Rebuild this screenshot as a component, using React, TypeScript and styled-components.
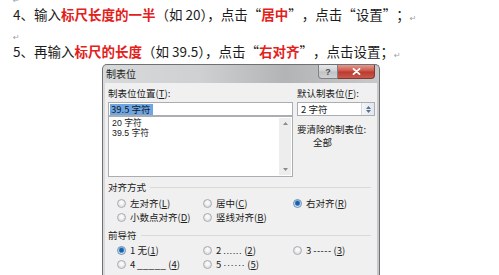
import styled, { createGlobalStyle } from 'styled-components';

const GlobalStyle = createGlobalStyle`
  html, body {
    margin: 0;
    padding: 0;
    background: #fff;
  }
  body {
    font-family: "Noto Sans CJK SC", "Liberation Sans", sans-serif;
  }
`;

const Page = styled.div`
  width: 499px;
  height: 275px;
  overflow: hidden;
`;

const Doc = styled.div`
  margin-top: -13.5px;
  padding-left: 13px;
  font-size: 13.5px;
  line-height: 18.5px;
  color: #1c1c1c;
`;

const Para = styled.div`
  height: 18.5px;
  white-space: nowrap;
`;

const Em = styled.b`
  color: #e3211b;
  font-weight: 700;
`;

// full-width curly quotes, as a Chinese Word document sets them
const Q = styled.span<{ $open?: boolean }>`
  display: inline-block;
  width: 1em;
  text-align: ${(p) => (p.$open ? 'right' : 'left')};
`;

const Mark = styled.span`
  font-family: "DejaVu Sans", sans-serif;
  font-size: 8px;
  color: #a0a0a0;
  vertical-align: -1px;
`;

const Dialog = styled.div`
  margin: 3.5px 0 0 102px;
  width: 278px;
  box-sizing: border-box;
  border: 1px solid #6e7276;
  border-bottom: none;
  border-radius: 5px 5px 0 0;
  padding: 0 2px;
  background: linear-gradient(to right, #d8d9da 0%, #cfd0d2 35%, #b2b4b6 66%, #c6c8ca 100%);
`;

const TitleBar = styled.div`
  height: 18px;
  display: flex;
  align-items: flex-start;
  padding-right: 2px;
`;

const Title = styled.div`
  padding: 2px 0 0 1px;
  font-size: 10px;
  line-height: 14px;
  color: #1d1d1d;
`;

const Caption = styled.div`
  margin-left: auto;
  display: flex;
`;

const CapButton = styled.div<{ $close?: boolean }>`
  width: ${(p) => (p.$close ? 37 : 20)}px;
  height: 14px;
  box-sizing: border-box;
  display: flex;
  align-items: center;
  justify-content: center;
  border: 1px solid ${(p) => (p.$close ? '#7c3a33' : '#7e8185')};
  border-top: none;
  border-radius: ${(p) => (p.$close ? '0 0 4px 0' : '0 0 0 4px')};
  ${(p) => (p.$close ? 'border-left: none;' : '')}
  background: ${(p) =>
    p.$close
      ? 'linear-gradient(#e39a8f, #cc5145 48%, #b83a2f 52%, #c9584b)'
      : 'linear-gradient(#e6e7e8, #cfd1d3 48%, #bfc1c4 52%, #d0d2d4)'};
  color: #4a4a4a;
  font-size: 9px;
  font-weight: 700;
  font-family: "Liberation Sans", sans-serif;
`;

const Body = styled.div`
  background: #f0f0f0;
  padding: 4px 2px 20px 3px;
  font-size: 9.5px;
  line-height: 13px;
  color: #202020;
`;

const Top = styled.div`
  display: grid;
  grid-template-columns: 185px 78px;
  column-gap: 4px;
`;

const Column = styled.div`
  display: flex;
  flex-direction: column;
`;

const Label = styled.div`
  height: 13px;
  white-space: nowrap;
`;

const Field = styled.div`
  margin-top: 2px;
  height: 14px;
  box-sizing: border-box;
  border: 1px solid #abadb3;
  background: #fff;
  display: flex;
  align-items: center;
  padding-left: 1px;
  white-space: nowrap;
  line-height: 11px;
`;

const Selected = styled.span`
  background: #6fa6e2;
  color: #0d1a2a;
  padding: 0 2px 0 1px;
`;

const FieldText = styled.span`
  padding-left: 2px;
  flex: 1;
`;

const ListBox = styled.div`
  height: 61px;
  box-sizing: border-box;
  border: 1px solid #abadb3;
  background: #fff;
  display: flex;
`;

const Items = styled.div`
  flex: 1;
  padding: 1px 0 0 3px;
  font-family: "Liberation Sans", "Noto Sans CJK SC", sans-serif;
  font-size: 8.8px;
  line-height: 10px;
`;

const ScrollBar = styled.div`
  width: 12px;
  margin: 1px 1px 1px 0;
  background: #ededed;
  display: flex;
  flex-direction: column;
  justify-content: space-between;
  align-items: center;
  padding: 4px 0;
`;

const Spin = styled.div`
  width: 12px;
  align-self: stretch;
  display: flex;
  flex-direction: column;
  justify-content: center;
  align-items: center;
  gap: 1px;
  background: linear-gradient(to right, #f4f6f8, #e2e7ee);
  border-left: 1px solid #d4d9df;
`;

const Note = styled.div`
  margin-top: 7px;
  white-space: nowrap;
`;

const NoteValue = styled.div`
  padding-left: 16px;
`;

const GroupHead = styled.div<{ $gap: number }>`
  margin-top: ${(p) => p.$gap}px;
  display: flex;
  align-items: center;
  height: 13px;
  white-space: nowrap;
  &::after {
    content: '';
    flex: 1;
    height: 1px;
    margin: 1px 4px 0 4px;
    background: #dadada;
  }
`;

const RadioGrid = styled.div<{ $gap: number }>`
  margin-top: ${(p) => p.$gap}px;
  padding-left: 9px;
  display: grid;
  grid-template-columns: 86px 90px 1fr;
  grid-auto-rows: 14px;
`;

const Radio = styled.div`
  display: flex;
  align-items: center;
  gap: 4px;
  white-space: nowrap;
  line-height: 14px;
`;

const Dot = styled.span<{ $on?: boolean }>`
  width: 9px;
  height: 9px;
  box-sizing: border-box;
  border-radius: 50%;
  border: 1px solid ${(p) => (p.$on ? '#6a8db5' : '#a7abb0')};
  background: ${(p) =>
    p.$on
      ? 'radial-gradient(circle at 50% 45%, #1d5fa6 0 1.6px, #4f8fd0 2.4px, #cfe0f2 3.2px, #eef3f8 4px)'
      : 'radial-gradient(circle at 50% 40%, #f8f8f8 0 1.5px, #dedfe0 3.5px, #eaeaea 4px)'};
`;

const Leader = styled.span`
  font-family: "Liberation Sans", sans-serif;
  letter-spacing: 0.5px;
  margin: 0 2px;
`;

const Arrow = ({ up, color = '#8a8a8a' }: { up?: boolean; color?: string }) => (
  <svg width="5" height="3" viewBox="0 0 5 3">
    <polygon points={up ? '0,3 5,3 2.5,0' : '0,0 5,0 2.5,3'} fill={color} />
  </svg>
);

const CloseGlyph = () => (
  <svg width="9" height="7" viewBox="0 0 9 7">
    <path d="M1.5 0.8 L7.5 6.2 M7.5 0.8 L1.5 6.2" stroke="#fff" strokeWidth="1.8" strokeLinecap="round" />
  </svg>
);

const RadioItem = ({ on, children }: { on?: boolean; children: React.ReactNode }) => (
  <Radio>
    <Dot $on={on} />
    <span>{children}</span>
  </Radio>
);

export default function App() {
  return (
    <Page lang="zh-CN">
      <GlobalStyle />
      <Doc>
        <Para>
          <Mark>↵</Mark>
        </Para>
        <Para>
          4、输入<Em>标尺长度的一半</Em>（如 20），点击<Q $open>“</Q>
          <Em>居中</Em>
          <Q>”</Q>，点击<Q $open>“</Q>设置<Q>”</Q>；<Mark>↵</Mark>
        </Para>
        <Para>
          <Mark>↵</Mark>
        </Para>
        <Para>
          5、再输入<Em>标尺的长度</Em>（如 39.5），点击<Q $open>“</Q>
          <Em>右对齐</Em>
          <Q>”</Q>，点击设置；<Mark>↵</Mark>
        </Para>
      </Doc>

      <Dialog>
        <TitleBar>
          <Title>制表位</Title>
          <Caption>
            <CapButton>?</CapButton>
            <CapButton $close>
              <CloseGlyph />
            </CapButton>
          </Caption>
        </TitleBar>
        <Body>
          <Top>
            <Column>
              <Label>
                制表位位置(<u>T</u>):
              </Label>
              <Field>
                <Selected>39.5 字符</Selected>
              </Field>
              <ListBox>
                <Items>
                  <div>20 字符</div>
                  <div>39.5 字符</div>
                </Items>
                <ScrollBar>
                  <Arrow up />
                  <Arrow />
                </ScrollBar>
              </ListBox>
            </Column>
            <Column>
              <Label>
                默认制表位(<u>F</u>):
              </Label>
              <Field>
                <FieldText>2 字符</FieldText>
                <Spin>
                  <Arrow up color="#5a6f8c" />
                  <Arrow color="#5a6f8c" />
                </Spin>
              </Field>
              <Note>要清除的制表位:</Note>
              <NoteValue>全部</NoteValue>
            </Column>
          </Top>

          <GroupHead $gap={3.5}>对齐方式</GroupHead>
          <RadioGrid $gap={2.5}>
            <RadioItem>
              左对齐(<u>L</u>)
            </RadioItem>
            <RadioItem>
              居中(<u>C</u>)
            </RadioItem>
            <RadioItem on>
              右对齐(<u>R</u>)
            </RadioItem>
            <RadioItem>
              小数点对齐(<u>D</u>)
            </RadioItem>
            <RadioItem>
              竖线对齐(<u>B</u>)
            </RadioItem>
          </RadioGrid>

          <GroupHead $gap={4.5}>前导符</GroupHead>
          <RadioGrid $gap={1.5}>
            <RadioItem on>
              1 无(<u>1</u>)
            </RadioItem>
            <RadioItem>
              2<Leader>......</Leader>(<u>2</u>)
            </RadioItem>
            <RadioItem>
              3<Leader>-----</Leader>(<u>3</u>)
            </RadioItem>
            <RadioItem>
              4<Leader>_____</Leader>(<u>4</u>)
            </RadioItem>
            <RadioItem>
              5<Leader>······</Leader>(<u>5</u>)
            </RadioItem>
          </RadioGrid>
        </Body>
      </Dialog>
    </Page>
  );
}
